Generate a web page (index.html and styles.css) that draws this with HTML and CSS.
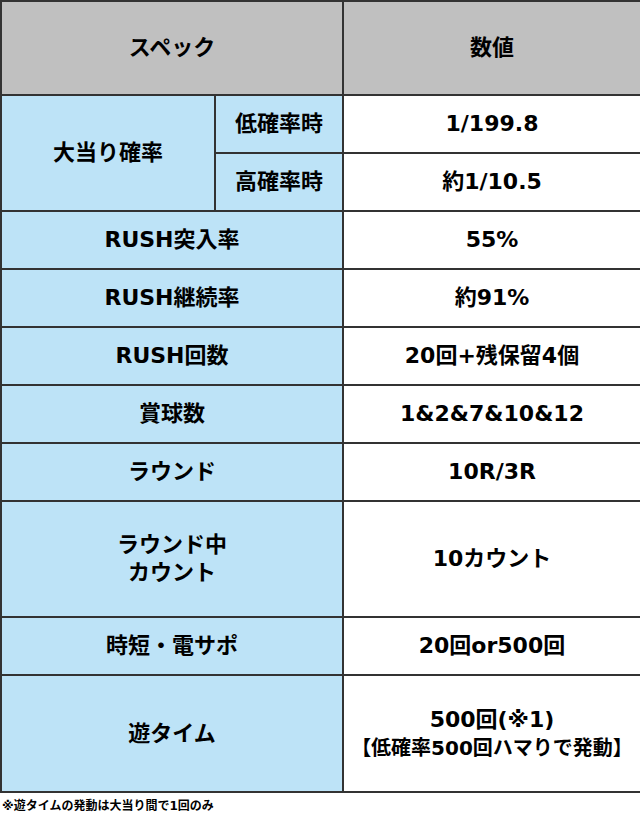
FILE: index.html
```html
<!DOCTYPE html>
<html lang="ja">
<head>
<meta charset="utf-8">
<link rel="stylesheet" href="styles.css">
</head>
<body>
<table class="spec">
  <colgroup>
    <col class="c1"><col class="c2"><col class="c3">
  </colgroup>
  <tr class="head">
    <th colspan="2">スペック</th>
    <th>数値</th>
  </tr>
  <tr class="r">
    <td class="label" rowspan="2">大当り確率</td>
    <td class="label">低確率時</td>
    <td class="val">1/199.8</td>
  </tr>
  <tr class="r">
    <td class="label">高確率時</td>
    <td class="val">約1/10.5</td>
  </tr>
  <tr class="r">
    <td class="label" colspan="2">RUSH突入率</td>
    <td class="val">55%</td>
  </tr>
  <tr class="r">
    <td class="label" colspan="2">RUSH継続率</td>
    <td class="val">約91%</td>
  </tr>
  <tr class="r">
    <td class="label" colspan="2">RUSH回数</td>
    <td class="val">20回+残保留4個</td>
  </tr>
  <tr class="r">
    <td class="label" colspan="2">賞球数</td>
    <td class="val">1&amp;2&amp;7&amp;10&amp;12</td>
  </tr>
  <tr class="r">
    <td class="label" colspan="2">ラウンド</td>
    <td class="val">10R/3R</td>
  </tr>
  <tr class="r2">
    <td class="label" colspan="2">ラウンド中<br>カウント</td>
    <td class="val">10カウント</td>
  </tr>
  <tr class="r">
    <td class="label" colspan="2">時短・電サポ</td>
    <td class="val">20回or500回</td>
  </tr>
  <tr class="r3">
    <td class="label" colspan="2">遊タイム</td>
    <td class="val">500回(※1)<br><span class="sub">【低確率500回ハマりで発動】</span></td>
  </tr>
</table>
<p class="note">※遊タイムの発動は大当り間で1回のみ</p>
</body>
</html>
```
FILE: styles.css
```css
html, body {
  margin: 0;
  padding: 0;
  background: #fff;
}
body {
  font-family: "DejaVu Sans", "Noto Sans CJK JP", sans-serif;
  font-weight: 700;
  color: #000;
}
.spec {
  width: 640px;
  border-collapse: collapse;
  table-layout: fixed;
}
.c1 { width: 214px; }
.c2 { width: 128px; }
.c3 { width: 298px; }
.spec th, .spec td {
  border: 2px solid #333;
  text-align: center;
  vertical-align: middle;
  padding: 0;
  font-size: 22px;
  line-height: 28px;
  font-weight: 700;
}
.spec th {
  background: #c0c0c0;
}
.head { height: 94px; }
.r { height: 58px; }
.r2 { height: 116px; }
.r3 { height: 117px; }
.label { background: #bde3f7; }
.val { background: #fff; }
.sub {
  font-size: 20px;
  white-space: nowrap;
}
.note {
  margin: 6px 0 0 2px;
  font-size: 12px;
  line-height: 14px;
  font-weight: 700;
}
```
